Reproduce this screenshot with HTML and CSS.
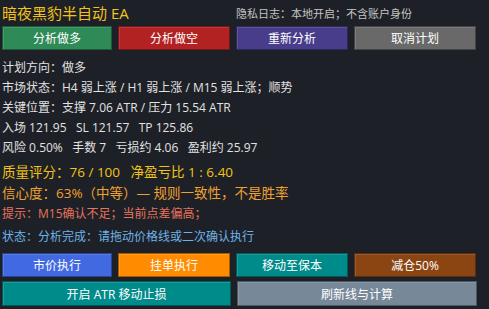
FILE: index.html
```html
<!DOCTYPE html>
<html lang="zh-CN">
<head>
<meta charset="UTF-8" />
<title>暗夜黑豹半自动 EA</title>
<link rel="stylesheet" href="styles.css">
</head>
<body>

<div class="header">
  <h1>暗夜黑豹半自动 EA</h1>
  <span class="privacy">隐私日志：本地开启；不含账户身份</span>
</div>

<div class="btn-row">
  <button class="btn green">分析做多</button>
  <button class="btn red">分析做空</button>
  <button class="btn purple">重新分析</button>
  <button class="btn gray">取消计划</button>
</div>

<div class="plan">
  <div class="line">计划方向：做多</div>
  <div class="line">市场状态：H4 弱上涨 / H1 弱上涨 / M15 弱上涨；顺势</div>
  <div class="line">关键位置：支撑 7.06 ATR / 压力 15.54 ATR</div>
  <div class="line">入场 121.95&nbsp;&nbsp;&nbsp;SL 121.57&nbsp;&nbsp;&nbsp;TP 125.86</div>
  <div class="line">风险 0.50%&nbsp;&nbsp;&nbsp;手数 7&nbsp;&nbsp;&nbsp;亏损约 4.06&nbsp;&nbsp;&nbsp;盈利约 25.97</div>
  <div class="line score">质量评分：76 / 100&nbsp;&nbsp;&nbsp;净盈亏比 1 : 6.40</div>
  <div class="line confidence">信心度：63%（中等）— 规则一致性，不是胜率</div>
  <div class="line hint">提示：M15确认不足；当前点差偏高；</div>
  <div class="line status">状态：分析完成：请拖动价格线或二次确认执行</div>
</div>

<div class="btn-row bottom">
  <button class="btn blue">市价执行</button>
  <button class="btn orange">挂单执行</button>
  <button class="btn teal">移动至保本</button>
  <button class="btn brown">减仓50%</button>
</div>
<div class="btn-row wide">
  <button class="btn teal">开启 ATR 移动止损</button>
  <button class="btn slate">刷新线与计算</button>
</div>

</body>
</html>
```

FILE: styles.css
```css
body {
  margin: 0;
  padding: 0 12px 0 2px;
  background: #1d2026;
  color: #e2e2e2;
  font-family: "Open Sans", "Noto Sans CJK SC", sans-serif;
  font-size: 12px;
}
.header {
  display: flex;
  align-items: center;
  height: 25px;
}
h1 {
  margin: 0;
  font-size: 15px;
  font-weight: normal;
  color: #f2c318;
  width: 234px;
}
.privacy {
  color: #c4c4c4;
  font-size: 11px;
}
.btn-row {
  display: grid;
  grid-template-columns: 110px 112px 112px 122px;
  column-gap: 6px;
  margin-top: 1px;
}
.btn {
  height: 24px;
  border: 1px solid rgba(0, 0, 0, 0.35);
  box-shadow: inset 1px 1px 0 rgba(255, 255, 255, 0.12);
  color: #fff;
  font-family: inherit;
  font-size: 12px;
  padding: 0;
  cursor: pointer;
}
.green { background: #2e8b57; }
.red { background: #b22222; }
.purple { background: #483d8b; }
.gray { background: #696969; }
.blue { background: #4169e1; }
.orange { background: #ff8c00; }
.teal { background: #008b8b; }
.brown { background: #8b4513; }
.slate { background: #778899; }

.plan {
  padding-top: 8px;
}
.line {
  height: 20px;
  line-height: 20px;
  white-space: nowrap;
}
.score {
  font-size: 13.5px;
  color: #f2c318;
  height: 21px;
  line-height: 21px;
  margin-top: 4px;
}
.confidence {
  font-size: 13.5px;
  color: #f0a030;
  height: 21px;
  line-height: 21px;
}
.hint {
  color: #e8735f;
}
.status {
  color: #6fb3e6;
  margin-top: 3px;
}
.btn-row.bottom {
  margin-top: 6px;
}
.btn-row.wide {
  grid-template-columns: 229px 240px;
  margin-top: 4px;
}
.btn-row.wide .btn {
  height: 25px;
}
```
